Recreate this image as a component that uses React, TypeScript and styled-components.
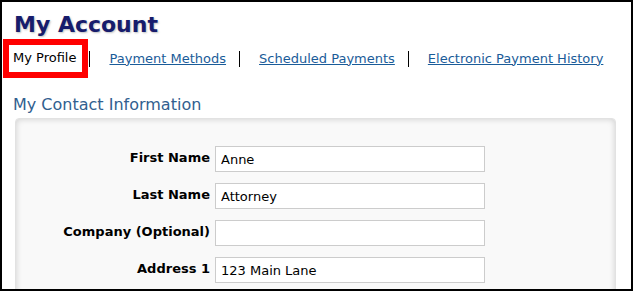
import React from "react";
import styled, { createGlobalStyle } from "styled-components";

const GlobalStyle = createGlobalStyle`
  html, body {
    margin: 0;
    padding: 0;
    background: #fff;
  }
  body {
    font-family: "DejaVu Sans", Verdana, sans-serif;
  }
`;

const tabs = [
  { label: "Payment Methods" },
  { label: "Scheduled Payments" },
  { label: "Electronic Payment History" },
];

const fields = [
  { label: "First Name", value: "Anne" },
  { label: "Last Name", value: "Attorney" },
  { label: "Company (Optional)", value: "" },
  { label: "Address 1", value: "123 Main Lane" },
];

export default function App() {
  return (
    <>
      <GlobalStyle />
      <Frame>
        <Title>My Account</Title>
        <TabBar>
          <ActiveTab>My Profile</ActiveTab>
          {tabs.map((t) => (
            <React.Fragment key={t.label}>
              <Separator />
              <TabLink href="#">{t.label}</TabLink>
            </React.Fragment>
          ))}
        </TabBar>
        <SectionTitle>My Contact Information</SectionTitle>
        <Panel>
          <Form>
            {fields.map((f) => (
              <React.Fragment key={f.label}>
                <Label>{f.label}</Label>
                <TextInput defaultValue={f.value} />
              </React.Fragment>
            ))}
          </Form>
        </Panel>
      </Frame>
    </>
  );
}

const Frame = styled.div`
  box-sizing: border-box;
  width: 633px;
  height: 291px;
  border: 2px solid #000;
  padding: 7px 0 0 1px;
  overflow: hidden;
`;

const Title = styled.h1`
  margin: 0 0 0 11px;
  padding-top: 2px;
  font-size: 22px;
  line-height: 28px;
  font-weight: bold;
  color: #171c6c;
  text-shadow: 1px 1px 2px rgba(0, 0, 0, 0.25);
`;

const TabBar = styled.div`
  display: flex;
  align-items: center;
  font-size: 13px;
  line-height: 16px;
`;

const ActiveTab = styled.span`
  border: 6px solid #f00;
  padding: 5px 6px 6px 4px;
  color: #000;
  margin-right: 1px;
`;

const Separator = styled.span`
  width: 1px;
  height: 16px;
  background: #000;
`;

const TabLink = styled.a`
  color: #1a5c99;
  text-decoration: underline;
  margin: 0 13px 0 19px;
`;

const SectionTitle = styled.h2`
  margin: 17px 0 0 10px;
  font-size: 16px;
  line-height: 20px;
  font-weight: normal;
  color: #31608f;
`;

const Panel = styled.div`
  margin: 3px 0 0 12px;
  width: 601px;
  height: 200px;
  box-sizing: border-box;
  background: #f9f9f9;
  border: 1px solid #e2e2e2;
  border-radius: 4px;
  box-shadow: inset 0 0 6px rgba(0, 0, 0, 0.18);
  padding-top: 27px;
`;

const Form = styled.div`
  display: grid;
  grid-template-columns: 194px 270px;
  column-gap: 5px;
  row-gap: 11px;
`;

const Label = styled.label`
  display: flex;
  align-items: center;
  justify-content: flex-end;
  padding-bottom: 3px;
  font-size: 13px;
  line-height: 16px;
  font-weight: bold;
  color: #000;
`;

const TextInput = styled.input`
  box-sizing: border-box;
  width: 270px;
  height: 26px;
  margin: 0;
  padding: 0 5px;
  border: 1px solid #ccc;
  background: #fff;
  font-family: "DejaVu Sans", Verdana, sans-serif;
  font-size: 13px;
  color: #000;
  outline: none;
`;
